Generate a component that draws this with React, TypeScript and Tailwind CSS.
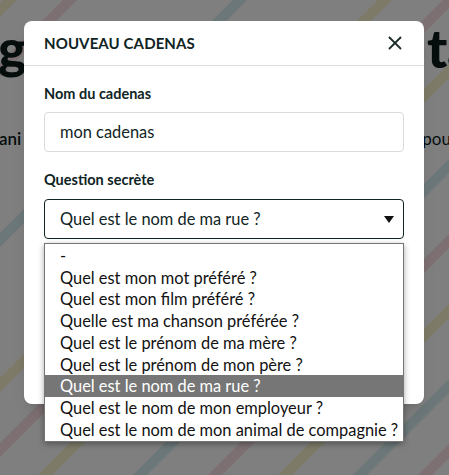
import { X } from "lucide-react";

const options = [
  "-",
  "Quel est mon mot préféré ?",
  "Quel est mon film préféré ?",
  "Quelle est ma chanson préférée ?",
  "Quel est le prénom de ma mère ?",
  "Quel est le prénom de mon père ?",
  "Quel est le nom de ma rue ?",
  "Quel est le nom de mon employeur ?",
  "Quel est le nom de mon animal de compagnie ?",
];

const stripes = [
  { c: 10, color: "#f3e27a" },
  { c: 70, color: "#f2a7b5" },
  { c: 240, color: "#8fd3dc" },
  { c: 385, color: "#f3e27a" },
  { c: 450, color: "#f2a7b5" },
  { c: 520, color: "#f3e27a" },
  { c: 615, color: "#8fd3dc" },
  { c: 690, color: "#f2a7b5" },
  { c: 760, color: "#f3e27a" },
  { c: 835, color: "#8fd3dc" },
  { c: 900, color: "#f2a7b5" },
];

function Backdrop() {
  return (
    <svg className="absolute inset-0" width="449" height="475" viewBox="0 0 449 475">
      <rect width="449" height="475" fill="#ffffff" />
      {stripes.map((s, i) => (
        <line key={i} x1={s.c - 500} y1={500} x2={s.c + 500} y2={-500} stroke={s.color} strokeWidth="10" opacity="0.35" />
      ))}
    </svg>
  );
}

export default function App() {
  return (
    <div className="relative h-[475px] w-[449px] overflow-hidden font-['Lato','Noto_Sans',sans-serif]">
      <Backdrop />
      <div className="relative flex flex-col pt-[16px]">
        <div className="flex justify-between text-[54px] font-black leading-[64px] text-[#0b1a1a]">
          <span className="-ml-[2px]">gi</span>
          <span className="-mr-[26px]">ta</span>
        </div>
        <div className="mt-[46px] flex justify-between text-[17px] font-semibold text-[#0b1a1a]">
          <span className="-ml-[1px]">ani</span>
          <span className="-mr-[2px] font-normal">pou</span>
        </div>
      </div>
      <div className="absolute inset-0 bg-black/50" />

      <div className="absolute left-[24px] top-[21px] h-[383px] w-[400px] rounded-[8px] bg-white text-[#0f2424] shadow-lg">
        <div className="flex h-[45px] items-center justify-between border-b border-[#dcdcdc] pl-[20px] pr-[20px]">
          <h2 className="text-[15px] font-bold tracking-[0.1px]">NOUVEAU CADENAS</h2>
          <X size={22} strokeWidth={2} className="-mr-[2px] text-[#1d2b2b]" />
        </div>
        <div className="flex flex-col px-[20px] pt-[18px]">
          <label className="text-[14.5px] font-bold leading-[20px]">Nom du cadenas</label>
          <div className="mt-[8px] flex h-[40px] items-center rounded-[4px] border border-[#dcdcdc] px-[15px] text-[16.4px]">
            mon cadenas
          </div>
          <label className="mt-[18px] text-[14.5px] font-bold leading-[20px]">Question secrète</label>
          <div className="mt-[9px] flex h-[40px] items-center justify-between rounded-[4px] border border-[#0f2424] pl-[15px] pr-[9px] text-[16.4px]">
            <span>Quel est le nom de ma rue ?</span>
            <svg width="10" height="7" viewBox="0 0 10 7">
              <path d="M0 0 L10 0 L5 7 Z" fill="#111" />
            </svg>
          </div>
        </div>
      </div>

      <div className="absolute left-[44px] top-[243px] w-[360px] border border-[#767676] bg-white py-[1px] text-[16.4px] leading-[21.7px] text-[#111] shadow-[0_2px_6px_rgba(0,0,0,0.35)]">
        {options.map((o) => (
          <div key={o} className={o === "Quel est le nom de ma rue ?" ? "bg-[#767676] pl-[15px] text-white" : "pl-[15px]"}>
            {o}
          </div>
        ))}
      </div>
    </div>
  );
}
